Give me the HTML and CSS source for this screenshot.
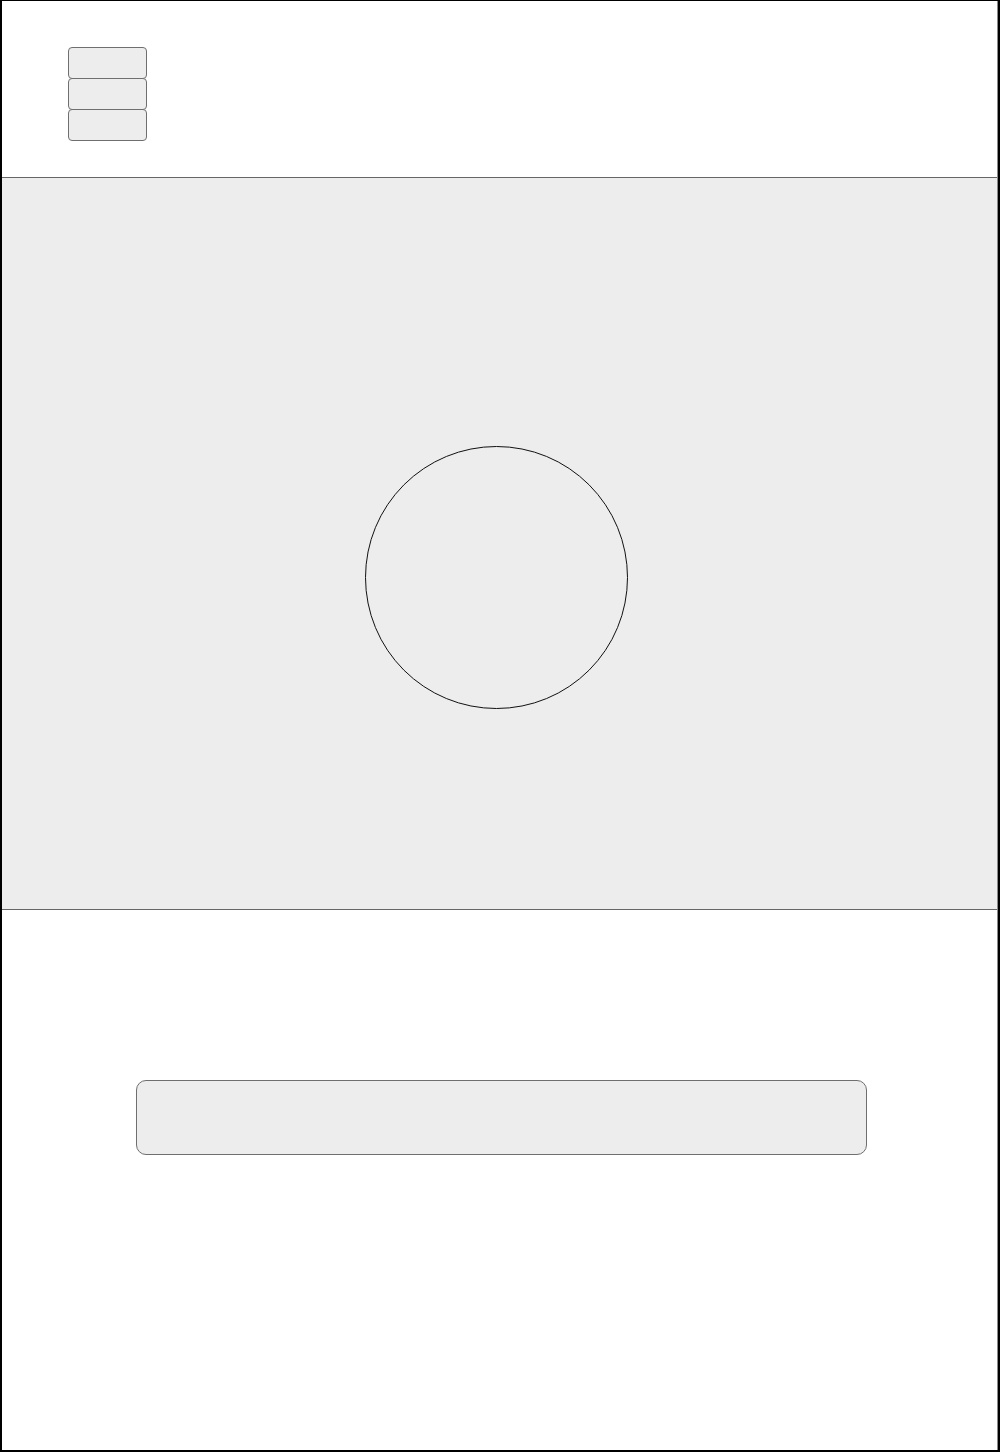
FILE: index.html
```html
<!DOCTYPE html>
<html lang="en">
<head>
<meta charset="utf-8">
<title>Wireframe</title>
<link rel="stylesheet" href="styles.css">
</head>
<body>
<div class="frame">
  <div class="page">
    <header class="header">
      <div class="tabs">
        <div class="tab"></div>
        <div class="tab"></div>
        <div class="tab"></div>
      </div>
    </header>
    <section class="band">
      <div class="circle"></div>
    </section>
    <section class="footer">
      <div class="bar"></div>
    </section>
  </div>
</div>
</body>
</html>
```

FILE: styles.css
```css
html, body {
  margin: 0;
  padding: 0;
  background: #ffffff;
  font-family: "Liberation Sans", Arial, sans-serif;
}

.frame {
  box-sizing: border-box;
  width: 1000px;
  height: 1452px;
  border-style: solid;
  border-color: #000000;
  border-width: 1px 2px 2px 2px;
  background: #ffffff;
}

.page {
  box-sizing: border-box;
  height: 100%;
  border-right: 1px solid #8a8a8a;
  display: flex;
  flex-direction: column;
}

.header {
  box-sizing: border-box;
  height: 176px;
  padding: 46px 0 0 66px;
}

.tabs {
  display: flex;
  flex-direction: column;
  width: 79px;
}

.tab {
  box-sizing: border-box;
  height: 32px;
  border: 1px solid #6f6f6f;
  border-radius: 4px;
  background: #ededed;
}

.tab + .tab {
  margin-top: -1px;
}

.band {
  box-sizing: border-box;
  height: 733px;
  background: #ededed;
  border-top: 1px solid #666666;
  border-bottom: 1px solid #666666;
  padding: 268px 0 0 363px;
}

.circle {
  box-sizing: border-box;
  width: 263px;
  height: 263px;
  border: 1px solid #111111;
  border-radius: 50%;
}

.footer {
  flex: 1;
  padding: 169.5px 0 0 133.5px;
}

.bar {
  box-sizing: border-box;
  width: 731.5px;
  height: 75.5px;
  background: #ededed;
  border: 1px solid #6f6f6f;
  border-radius: 10px;
}
```
